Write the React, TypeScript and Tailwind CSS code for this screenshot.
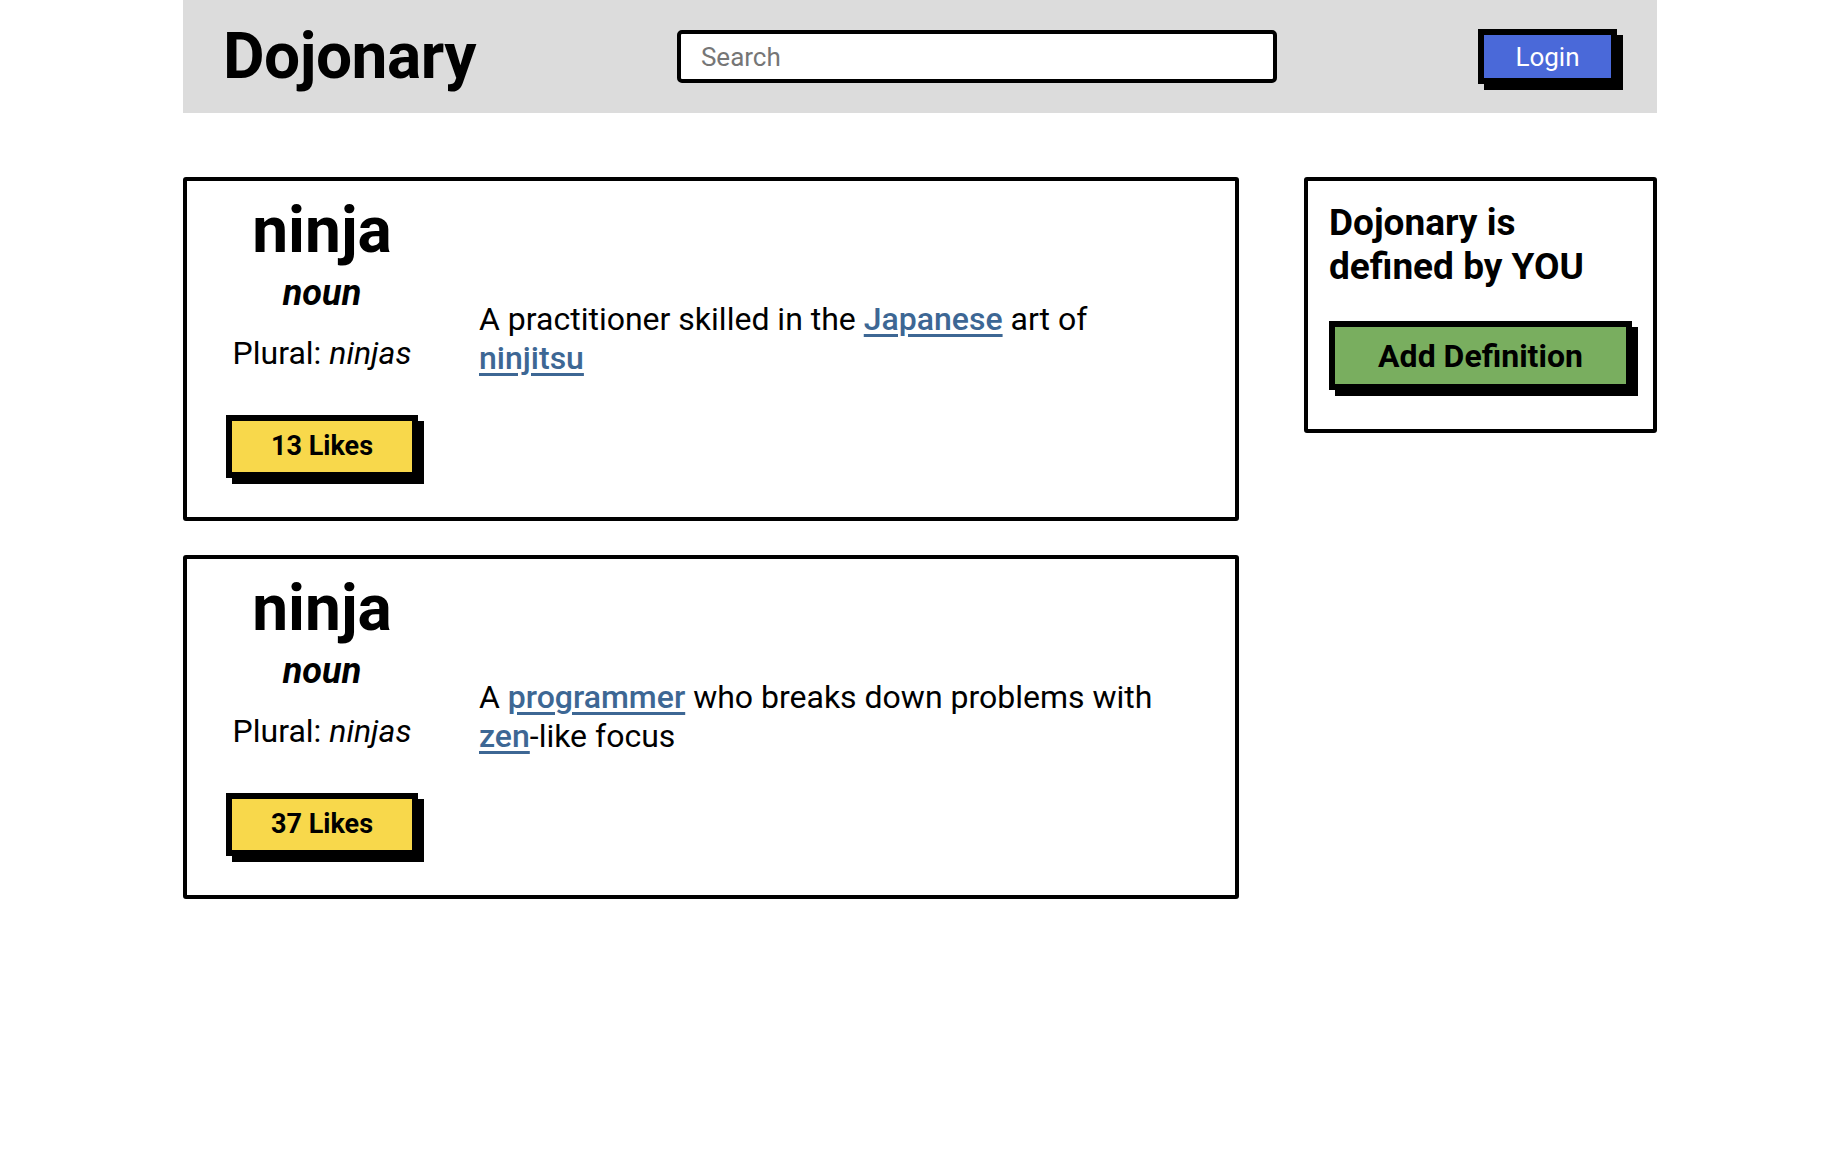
import React from "react";

type Entry = {
  id: number;
  word: string;
  pos: string;
  plural: string;
  likes: number;
  parts: { text: string; link?: boolean }[];
};

const entries: Entry[] = [
  {
    id: 1,
    word: "ninja",
    pos: "noun",
    plural: "ninjas",
    likes: 13,
    parts: [
      { text: "A practitioner skilled in the " },
      { text: "Japanese", link: true },
      { text: " art of " },
      { text: "ninjitsu", link: true },
    ],
  },
  {
    id: 2,
    word: "ninja",
    pos: "noun",
    plural: "ninjas",
    likes: 37,
    parts: [
      { text: "A " },
      { text: "programmer", link: true },
      { text: " who breaks down problems with " },
      { text: "zen", link: true },
      { text: "-like focus" },
    ],
  },
];

const Header = () => {
  return (
    <header className="flex h-[113px] items-center justify-between bg-[#dcdcdc] px-10">
      <h1 className="text-[64px] font-bold leading-none tracking-[-0.5px] text-black">
        Dojonary
      </h1>

      <input
        type="text"
        placeholder="Search"
        className="h-[53px] w-[600px] rounded-[5px] border-[4px] border-black bg-white px-5 text-[26px] text-black placeholder:text-[#767676] focus:outline-none"
      />

      <button className="h-[55px] w-[139px] border-[6px] border-black bg-[#4a69d9] text-[26px] leading-none text-white shadow-[6px_6px_0_0_#000]">
        Login
      </button>
    </header>
  );
};

const EntryCard = ({ entry }: { entry: Entry }) => {
  return (
    <div className="flex items-start rounded-[3px] border-4 border-black pb-[39px] pl-[39px] pt-3">
      {/* Col */}
      <div className="flex w-[192px] flex-col items-center">
        <h2 className="text-[64px] font-bold leading-[75px]">{entry.word}</h2>
        <p className="mt-1 text-[36px] font-bold italic leading-[42px]">
          {entry.pos}
        </p>
        <p className="mt-5 whitespace-nowrap text-[32px] leading-[38px]">
          Plural: <em>{entry.plural}</em>
        </p>
        <button className="mt-[43px] h-[63px] w-[192px] border-[6px] border-black bg-[#f8d84b] text-[27px] font-bold leading-none shadow-[6px_6px_0_0_#000]">
          {entry.likes} Likes
        </button>
      </div>

      {/* Col */}
      <p className="ml-[61px] mt-[107px] w-[700px] text-[32px] leading-[38.5px] text-black">
        {entry.parts.map((part, i) =>
          part.link ? (
            <a
              key={i}
              href="#"
              className="font-medium text-[#3d6794] underline decoration-[3px] underline-offset-[4px]"
            >
              {part.text}
            </a>
          ) : (
            <span key={i}>{part.text}</span>
          ),
        )}
      </p>
    </div>
  );
};

const Sidebar = () => {
  return (
    <aside className="self-start rounded-[3px] border-4 border-black px-[21px] pb-[39px] pt-5">
      <h3 className="text-[37px] font-bold leading-[44px]">
        Dojonary is defined by YOU
      </h3>
      <button className="mt-8 h-[69px] w-full border-[6px] border-black bg-[#79ae5f] text-[32px] font-bold leading-none shadow-[6px_6px_0_0_#000]">
        Add Definition
      </button>
    </aside>
  );
};

export default function App() {
  return (
    <div className="min-h-screen bg-white font-['Roboto',sans-serif] text-black">
      <div className="mx-auto w-[1474px]">
        <Header />

        <main className="mt-16 grid grid-cols-[1fr_353px] gap-[65px]">
          <div className="flex flex-col gap-[34px]">
            {entries.map((entry) => (
              <EntryCard key={entry.id} entry={entry} />
            ))}
          </div>
          <Sidebar />
        </main>
      </div>
    </div>
  );
}
